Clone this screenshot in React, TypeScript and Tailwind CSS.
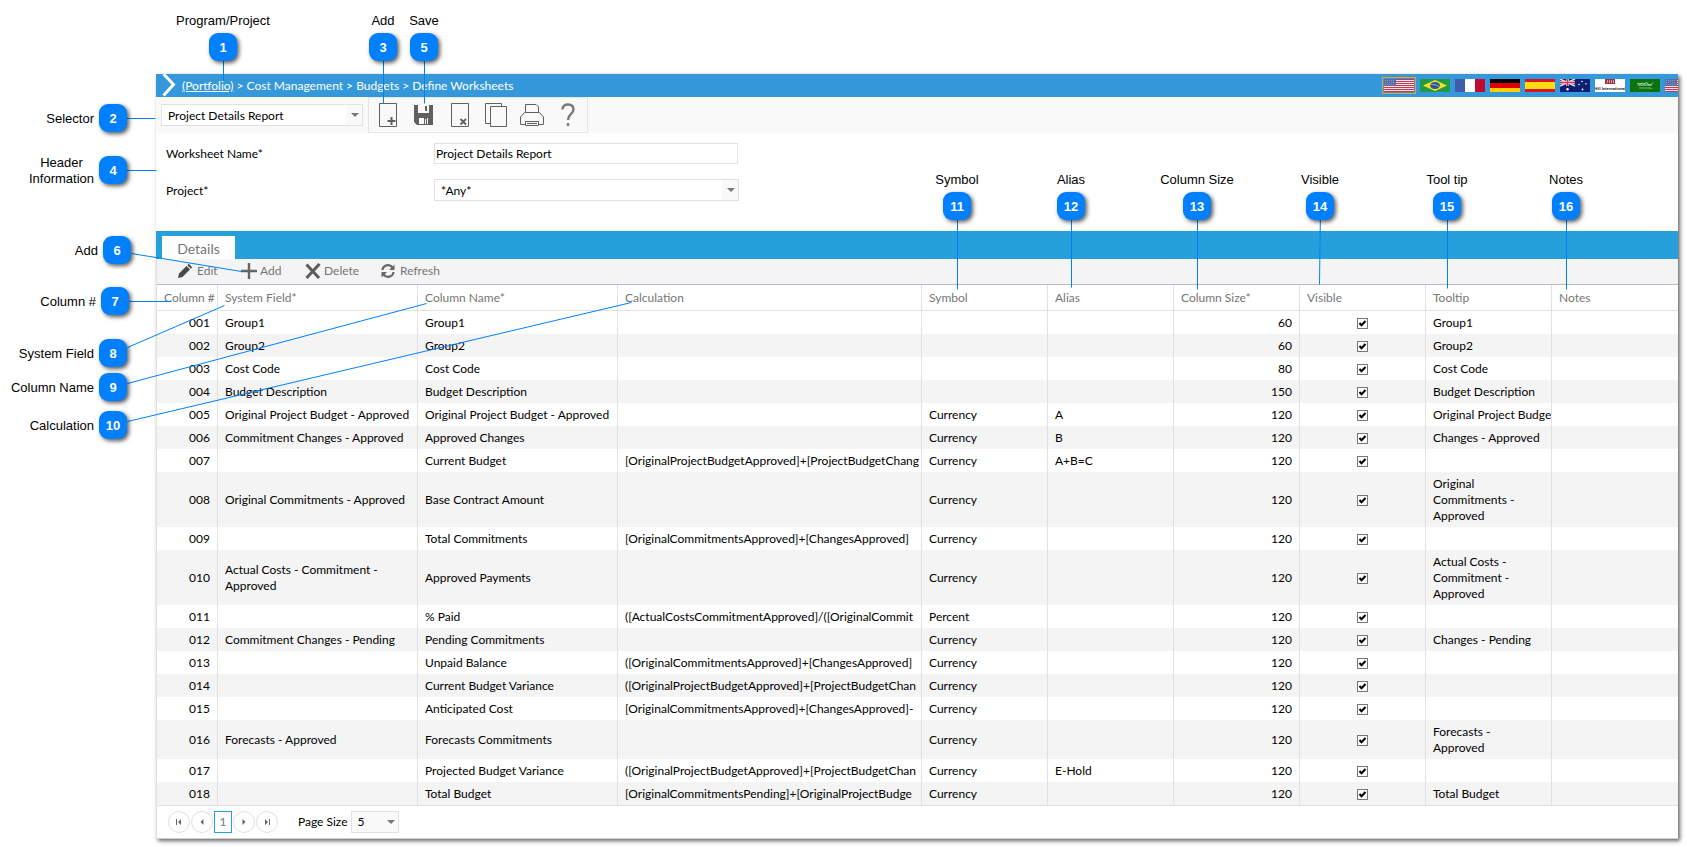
import React from 'react';
import { clsx } from 'clsx';

interface Row {
  id: string;
  field?: string;
  name: string;
  calc?: string;
  symbol?: string;
  alias?: string;
  size: number;
  tooltip?: string;
}

const rows: Row[] = [
  { id: '001', field: 'Group1', name: 'Group1', size: 60, tooltip: 'Group1' },
  { id: '002', field: 'Group2', name: 'Group2', size: 60, tooltip: 'Group2' },
  { id: '003', field: 'Cost Code', name: 'Cost Code', size: 80, tooltip: 'Cost Code' },
  { id: '004', field: 'Budget Description', name: 'Budget Description', size: 150, tooltip: 'Budget Description' },
  { id: '005', field: 'Original Project Budget - Approved', name: 'Original Project Budget - Approved', symbol: 'Currency', alias: 'A', size: 120, tooltip: 'Original Project Budge' },
  { id: '006', field: 'Commitment Changes - Approved', name: 'Approved Changes', symbol: 'Currency', alias: 'B', size: 120, tooltip: 'Changes - Approved' },
  { id: '007', name: 'Current Budget', calc: '[OriginalProjectBudgetApproved]+[ProjectBudgetChang', symbol: 'Currency', alias: 'A+B=C', size: 120 },
  { id: '008', field: 'Original Commitments - Approved', name: 'Base Contract Amount', symbol: 'Currency', size: 120, tooltip: 'Original\nCommitments -\nApproved' },
  { id: '009', name: 'Total Commitments', calc: '[OriginalCommitmentsApproved]+[ChangesApproved]', symbol: 'Currency', size: 120 },
  { id: '010', field: 'Actual Costs - Commitment -\nApproved', name: 'Approved Payments', symbol: 'Currency', size: 120, tooltip: 'Actual Costs -\nCommitment -\nApproved' },
  { id: '011', name: '% Paid', calc: '([ActualCostsCommitmentApproved]/([OriginalCommit', symbol: 'Percent', size: 120 },
  { id: '012', field: 'Commitment Changes - Pending', name: 'Pending Commitments', symbol: 'Currency', size: 120, tooltip: 'Changes - Pending' },
  { id: '013', name: 'Unpaid Balance', calc: '([OriginalCommitmentsApproved]+[ChangesApproved]', symbol: 'Currency', size: 120 },
  { id: '014', name: 'Current Budget Variance', calc: '([OriginalProjectBudgetApproved]+[ProjectBudgetChan', symbol: 'Currency', size: 120 },
  { id: '015', name: 'Anticipated Cost', calc: '[OriginalCommitmentsApproved]+[ChangesApproved]-', symbol: 'Currency', size: 120 },
  { id: '016', field: 'Forecasts - Approved', name: 'Forecasts Commitments', symbol: 'Currency', size: 120, tooltip: 'Forecasts -\nApproved' },
  { id: '017', name: 'Projected Budget Variance', calc: '([OriginalProjectBudgetApproved]+[ProjectBudgetChan', symbol: 'Currency', alias: 'E-Hold', size: 120 },
  { id: '018', name: 'Total Budget', calc: '[OriginalCommitmentsPending]+[OriginalProjectBudge', symbol: 'Currency', size: 120, tooltip: 'Total Budget' },
];

interface Callout {
  n: number;
  label: string;
  x: number;
  y: number;
  side: 'top' | 'left';
  to: [number, number];
  from?: [number, number];
}

// x / y are the centre of the numbered marker
const callouts: Callout[] = [
  { n: 1, label: 'Program/Project', x: 223, y: 47, side: 'top', to: [223, 80] },
  { n: 2, label: 'Selector', x: 113, y: 118, side: 'left', to: [155, 118] },
  { n: 3, label: 'Add', x: 383, y: 47, side: 'top', to: [383, 103] },
  { n: 4, label: 'Header\nInformation', x: 113, y: 170, side: 'left', to: [156, 170] },
  { n: 5, label: 'Save', x: 424, y: 47, side: 'top', to: [424, 103] },
  { n: 6, label: 'Add', x: 117, y: 250, side: 'left', from: [131, 253], to: [241, 271] },
  { n: 7, label: 'Column #', x: 115, y: 301, side: 'left', to: [171, 301] },
  { n: 8, label: 'System Field', x: 113, y: 353, side: 'left', from: [127, 347], to: [224, 305] },
  { n: 9, label: 'Column Name', x: 113, y: 387, side: 'left', from: [127, 383], to: [426, 303] },
  { n: 10, label: 'Calculation', x: 113, y: 425, side: 'left', from: [127, 421], to: [631, 302] },
  { n: 11, label: 'Symbol', x: 957, y: 206, side: 'top', to: [957, 289] },
  { n: 12, label: 'Alias', x: 1071, y: 206, side: 'top', to: [1071, 287] },
  { n: 13, label: 'Column Size', x: 1197, y: 206, side: 'top', to: [1197, 289] },
  { n: 14, label: 'Visible', x: 1320, y: 206, side: 'top', to: [1319, 284] },
  { n: 15, label: 'Tool tip', x: 1447, y: 206, side: 'top', to: [1447, 288] },
  { n: 16, label: 'Notes', x: 1566, y: 206, side: 'top', to: [1566, 289] },
];

const CalloutPin: React.FC<{ item: Callout }> = ({ item }) => (
  <div className="absolute size-7" style={{ left: item.x - 14, top: item.y - 14 }}>
    <span
      className={clsx(
        'absolute whitespace-pre text-center text-[13px] leading-4 text-black',
        item.side === 'top' ? 'bottom-full left-1/2 mb-1 -translate-x-1/2' : 'right-full top-1/2 mr-[5px] -translate-y-1/2 pt-0.5'
      )}
    >
      {item.label}
    </span>
    <span className="flex size-7 items-center justify-center rounded-[9px] bg-[#0080ff] pt-0.5 text-[13px] font-bold leading-4 text-white shadow-[2px_2px_4px_rgba(0,0,0,0.65)]">
      {item.n}
    </span>
  </div>
);

const Callouts = () => (
  <div className="pointer-events-none absolute inset-0 overflow-hidden font-['Liberation_Sans',Arial,sans-serif]">
    <svg className="absolute inset-0 h-full w-full" stroke="#0080ff" strokeWidth="1" fill="none">
      {callouts.map((c) => {
        const [x1, y1] = c.from ?? [c.x, c.y];
        return <line key={c.n} x1={x1 + 0.5} y1={y1 + 0.5} x2={c.to[0] + 0.5} y2={c.to[1] + 0.5} />;
      })}
    </svg>
    {callouts.map((c) => (
      <CalloutPin key={c.n} item={c} />
    ))}
  </div>
);

/* ---- flags ---- */

const UsFlag = () => (
  <svg viewBox="0 0 30 13" className="h-[13px] w-[30px]">
    <rect width="30" height="13" fill="#f3e3e6" />
    {[0, 2, 4, 6, 8, 10, 12].map((y) => (
      <rect key={y} y={y} width="30" height="1" fill="#c23a52" />
    ))}
    <rect width="12" height="7" fill="#5a6ba5" />
    {[1, 3, 5].map((y) => (
      <path key={y} d={`M1 ${y + 0.5}H11`} stroke="#a9b3d3" strokeWidth="0.6" strokeDasharray="1 1" />
    ))}
  </svg>
);

const BrazilFlag = () => (
  <svg viewBox="0 0 30 13" className="h-[13px] w-[30px]">
    <rect width="30" height="13" fill="#229a43" />
    <path d="M15 1 27 6.5 15 12 3 6.5Z" fill="#f5e02a" />
    <ellipse cx="15" cy="6.5" rx="5" ry="3.4" fill="#2d5791" />
    <path d="M10.5 5.6C13 5 17 6 19.5 7.8" stroke="#c9d6e6" strokeWidth="0.7" fill="none" />
  </svg>
);

const FranceFlag = () => (
  <svg viewBox="0 0 30 13" className="h-[13px] w-[30px]">
    <rect width="10" height="13" fill="#3f5ba9" />
    <rect x="10" width="10" height="13" fill="#fff" />
    <rect x="20" width="10" height="13" fill="#c10a30" />
  </svg>
);

const GermanyFlag = () => (
  <svg viewBox="0 0 30 13" className="h-[13px] w-[30px]">
    <rect width="30" height="5" fill="#000" />
    <rect y="4" width="30" height="5" fill="#e00000" />
    <rect y="9" width="30" height="4" fill="#ffce00" />
  </svg>
);

const SpainFlag = () => (
  <svg viewBox="0 0 30 13" className="h-[13px] w-[30px]">
    <rect width="30" height="13" fill="#d9141e" />
    <rect y="3" width="30" height="7" fill="#fbdc10" />
  </svg>
);

const AustraliaFlag = () => (
  <svg viewBox="0 0 30 13" className="h-[13px] w-[30px]">
    <rect width="30" height="13" fill="#0d1f73" />
    <path d="M0 0 15 7M15 0 0 7" stroke="#e9d5e0" strokeWidth="1.6" />
    <path d="M7.5 0V7M0 3.5H15" stroke="#fff" strokeWidth="2.4" />
    <path d="M7.5 0V7M0 3.5H15" stroke="#e0304a" strokeWidth="1.4" />
    <g fill="#fff">
      <circle cx="7.5" cy="10.2" r="1.2" />
      <circle cx="22" cy="2.5" r="0.8" />
      <circle cx="19" cy="5.5" r="0.8" />
      <circle cx="26" cy="4.8" r="0.8" />
      <circle cx="22.5" cy="10.5" r="0.9" />
    </g>
  </svg>
);

const HillFlag = () => (
  <svg viewBox="0 0 30 13" className="h-[13px] w-[30px]">
    <rect width="30" height="13" fill="#fff" />
    <rect x="10" y="0" width="10" height="5" fill="#9c3540" />
    <path d="M12.5 1V4M14.5 1V4M16.5 1V4M18.5 1V4" stroke="#f3dada" strokeWidth="0.6" />
    <text x="15" y="11" fontSize="4" textAnchor="middle" fill="#111" fontWeight="bold" fontFamily="Liberation Sans">
      Hill International
    </text>
  </svg>
);

const SaudiFlag = () => (
  <svg viewBox="0 0 30 13" className="h-[13px] w-[30px]">
    <rect width="30" height="13" fill="#0b730d" />
    <path d="M7 5C9 3 9 6 11 4.5S13 6 15 4.5 17 3 18 5 21 6 23 3.5M8 6H22" stroke="#b9dcb9" strokeWidth="1" fill="none" />
    <path d="M9 9H20L22 9.6" stroke="#a5d0a5" strokeWidth="0.7" fill="none" />
  </svg>
);

const flags = [
  { title: 'Brazil', Flag: BrazilFlag },
  { title: 'France', Flag: FranceFlag },
  { title: 'Germany', Flag: GermanyFlag },
  { title: 'Spain', Flag: SpainFlag },
  { title: 'Australia', Flag: AustraliaFlag },
  { title: 'Hill International', Flag: HillFlag },
  { title: 'Saudi Arabia', Flag: SaudiFlag },
  { title: 'United States', Flag: UsFlag },
];

/* ---- toolbar icons ---- */

const tools = [
  {
    title: 'Add',
    icon: <path d="M3.5 .5H20.5V23.5H3.5Z" />,
    heavy: <path d="M15.5 14V22M11.5 18H19.5" strokeWidth="2" />,
  },
  {
    title: 'Save',
    icon: (
      <>
        <path d="M2 2H21V22H5L2 19Z" fill="#606060" stroke="none" />
        <path d="M6 2H17V10H6Z" fill="#f9f9f9" stroke="none" />
        <path d="M13 3H15V8H13Z" fill="#606060" stroke="none" />
        <path d="M7 15H16V21H7Z" fill="#f9f9f9" stroke="none" />
        <path d="M12 15H15V21H12Z" fill="#606060" stroke="none" />
        <path d="M13 16H14V21H13Z" fill="#f9f9f9" stroke="none" />
      </>
    ),
  },
  {
    title: 'Delete',
    icon: <path d="M3.5 .5H20.5V23.5H3.5Z" />,
    heavy: <path d="M12.5 16 18 21.5M18 16 12.5 21.5" strokeWidth="1.8" />,
  },
  {
    title: 'Copy',
    icon: <path d="M6 20.5H1.5V.5H17.5V3M6.5 3.5H22.5V23.5H6.5Z" />,
  },
  {
    title: 'Print',
    icon: <path d="M5.5 9.5V1.5H16L18.5 4V9.5M4.5 9.5H19.5L23.5 14V21.5H18.5M5.5 21.5H.5V14L4.5 9.5M5.5 18.5H18.5V22.5H5.5ZM7 20.5H17" />,
  },
  {
    title: 'Help',
    icon: <path d="M6.5 6.5C6.5 3 9 1.5 12 1.5 15.5 1.5 17.5 3.5 17.5 6.5 17.5 11 12 11 12 17M12 20V23" strokeWidth="2.4" stroke="#7a7a7a" />,
  },
];

const Caret = () => (
  <svg viewBox="0 0 8 4" className="pointer-events-none absolute right-1 top-1/2 h-1 w-2 -translate-y-1/2">
    <path d="M0 0H8L4 4Z" fill="#777" />
  </svg>
);

const EditIcon = () => (
  <svg viewBox="0 0 16 16" className="size-4">
    <path d="M0 15 1 10.5 8.5 3 12 6.5 4.5 14Z" fill="#4a4a4a" />
    <path d="M9.300 2.200 10.800 .8 14.200 4.200 12.800 5.700Z" fill="#4a4a4a" />
  </svg>
);

const AddIcon = () => (
  <svg viewBox="0 0 16 16" className="size-4">
    <path d="M8 0V16M0 8H16" stroke="#666" strokeWidth="2.4" />
  </svg>
);

const DeleteIcon = () => (
  <svg viewBox="0 0 16 16" className="size-4">
    <path d="M1.5 1.5 14 15M14.5 1 1.5 15" stroke="#5c5c5c" strokeWidth="3" />
  </svg>
);

const RefreshIcon = () => (
  <svg viewBox="0 0 16 16" className="size-4">
    <path d="M1.500 7C2 2 8.500 .5 11.500 4.500M12.500 9C12 14 5.500 15.500 2.500 11.500" fill="none" stroke="#666" strokeWidth="2.2" />
    <path d="M13.500 1.500V7H8ZM.5 14.500V9H6Z" fill="#666" />
  </svg>
);

const gridActions = [
  { label: 'Edit', icon: <EditIcon />, cls: 'w-[63px]' },
  { label: 'Add', icon: <AddIcon />, cls: 'w-16' },
  { label: 'Delete', icon: <DeleteIcon />, cls: 'w-[76px]' },
  { label: 'Refresh', icon: <RefreshIcon />, cls: 'w-16' },
];

const columns = [
  { title: 'Column #', cls: 'w-[61px]' },
  { title: 'System Field*', cls: 'w-[200px]' },
  { title: 'Column Name*', cls: 'w-[200px]' },
  { title: 'Calculation', cls: 'w-[304px]' },
  { title: 'Symbol', cls: 'w-[126px]' },
  { title: 'Alias', cls: 'w-[126px]' },
  { title: 'Column Size*', cls: 'w-[126px]' },
  { title: 'Visible', cls: 'w-[126px]' },
  { title: 'Tooltip', cls: 'w-[126px]' },
  { title: 'Notes', cls: '' },
];

const Cell: React.FC<{ children?: React.ReactNode; right?: boolean }> = ({ children, right }) => (
  <td
    className={clsx(
      'overflow-hidden whitespace-pre border-r border-[#e1e1e1] pb-[3px] pl-[7px] pt-1 last:border-r-0',
      right && 'pr-[7px] text-right'
    )}
  >
    {children}
  </td>
);

const VisibleBox: React.FC<{ id: string }> = ({ id }) => (
  <td className="border-r border-[#e1e1e1] p-0">
    <label className="relative mx-auto mt-px block size-[11px]">
      <input
        type="checkbox"
        defaultChecked
        aria-label={`Visible ${id}`}
        className="peer block size-[11px] appearance-none border border-[#777] bg-white"
      />
      <svg viewBox="0 0 11 11" className="pointer-events-none absolute inset-0 hidden size-[11px] peer-checked:block">
        <path d="M2.5 5 4.5 7.3 8.5 3" stroke="#000" strokeWidth="2" fill="none" />
      </svg>
    </label>
  </td>
);

const DetailsGrid = () => (
  <table className="w-full table-fixed border-separate border-spacing-0 border-t border-[#b9bcc6]">
    <thead>
      <tr>
        {columns.map((c) => (
          <th
            key={c.title}
            className={clsx(
              'h-[26px] overflow-hidden whitespace-nowrap border-b border-r border-[#e1e1e1] p-0 pl-[7px] text-left font-normal text-[#767676] last:border-r-0',
              c.cls
            )}
          >
            {c.title}
          </th>
        ))}
      </tr>
    </thead>
    <tbody>
      {rows.map((r) => (
        <tr key={r.id} className="even:bg-[#f4f4f4]">
          <Cell right>{r.id}</Cell>
          <Cell>{r.field}</Cell>
          <Cell>{r.name}</Cell>
          <Cell>{r.calc}</Cell>
          <Cell>{r.symbol}</Cell>
          <Cell>{r.alias}</Cell>
          <Cell right>{r.size}</Cell>
          <VisibleBox id={r.id} />
          <Cell>{r.tooltip}</Cell>
          <Cell />
        </tr>
      ))}
    </tbody>
  </table>
);

const PagerButton: React.FC<{ title: string; d: string }> = ({ title, d }) => (
  <button title={title} className="flex size-[22px] items-center justify-center rounded-full border border-[#e1e1e1]">
    <svg viewBox="0 0 8 8" className="size-2">
      <path d={d} fill="#666" />
    </svg>
  </button>
);

const Pager = () => (
  <div className="flex items-center gap-px border-t border-[#e1e1e1] py-[5px] pl-[11px]">
    <PagerButton title="First page" d="M1 1H2V7H1ZM3 4 6 1V7Z" />
    <PagerButton title="Previous page" d="M2.5 4 5.5 1V7Z" />
    <button className="h-[22px] w-[18px] border border-[#25a0da] text-[#767676]">1</button>
    <PagerButton title="Next page" d="M5.5 4 2.5 1V7Z" />
    <PagerButton title="Last page" d="M6 1H7V7H6ZM5 4 2 1V7Z" />
    <label htmlFor="page-size" className="ml-[19px] mr-0.5">
      Page Size
    </label>
    <div className="relative h-[22px] w-12">
      <select id="page-size" className="h-full w-full appearance-none border border-[#e1e1e1] bg-[#f9f9f9] pl-1.5">
        <option>5</option>
      </select>
      <Caret />
    </div>
  </div>
);

export default function App() {
  return (
    <div className="relative bg-white pb-2 pl-[156px] pr-[9px] pt-[74px] font-['Lato','Segoe_UI',sans-serif] text-[12px] leading-4 text-black">
      <main className="border-b border-[#d0d0d0] bg-white shadow-[2px_2px_4px_rgba(0,0,0,0.6)]">
        {/* Breadcrumb */}
        <header className="flex h-[23px] items-center bg-[#3598db] pl-1.5 text-white">
          <svg viewBox="0 0 14 23" className="h-[23px] w-[14px]">
            <path d="M1.5 0 11.5 10.5 1.5 21.5" stroke="#fff" strokeWidth="3" fill="none" />
          </svg>
          <nav className="ml-1.5 flex-1">
            <a href="#portfolio" className="underline">(Portfolio)</a>
            {' > Cost Management > Budgets > Define Worksheets'}
          </nav>
          <div className="flex w-[296px] items-center gap-[5px] overflow-hidden">
            <button title="United States" className="-mr-px flex shrink-0 border border-[#f59a23] p-px">
              <UsFlag />
            </button>
            {flags.map(({ title, Flag }) => (
              <button key={title} title={title} className="block shrink-0">
                <Flag />
              </button>
            ))}
          </div>
        </header>

        {/* Main toolbar */}
        <div className="flex h-9 items-center bg-[#f9f9f9] pl-[5px]">
          <div className="relative h-[22px] w-[202px]">
            <select
              aria-label="Worksheet"
              className="h-full w-full appearance-none border border-[#e1e1e1] bg-white pl-1.5 pt-px"
            >
              <option>Project Details Report</option>
            </select>
            <span className="pointer-events-none absolute inset-y-px right-px w-4 bg-[#f9f9f9]" />
            <Caret />
          </div>
          <div className="ml-[5px] flex h-9 w-[220px] items-center border border-[#e5e5e5] pl-px">
            {tools.map((t) => (
              <button key={t.title} title={t.title} className="flex w-9 justify-center">
                <svg viewBox="0 0 24 24" className="size-6" fill="none" stroke="#606060" strokeWidth="1">
                  {t.icon}
                  {t.heavy}
                </svg>
              </button>
            ))}
          </div>
        </div>

        {/* Header information */}
        <div className="grid grid-cols-[268px_1fr] items-center gap-y-[15px] pb-[30px] pl-2.5 pt-[10px]">
          <label htmlFor="worksheet-name">Worksheet Name*</label>
          <input
            id="worksheet-name"
            defaultValue="Project Details Report"
            className="h-[21px] w-[304px] border border-[#e1e1e1] pl-px"
          />
          <label htmlFor="project" className="pt-px">Project*</label>
          <div className="relative h-[22px] w-[305px]">
            <select id="project" className="h-full w-full appearance-none border border-[#e1e1e1] bg-white pl-1.5 pt-px">
              <option>*Any*</option>
            </select>
            <span className="pointer-events-none absolute inset-y-px right-px w-4 bg-[#f9f9f9]" />
            <Caret />
          </div>
        </div>

        {/* Details */}
        <div className="flex h-7 items-end bg-[#25a0da] pl-1.5">
          <button className="h-[23px] w-[73px] bg-white pt-0.5 text-[14px] text-[#767676]">Details</button>
        </div>
        <div className="border-l border-[#e1e1e1]">
          <div className="flex h-[25px] items-center bg-[#f4f4f4] pb-0.5 pl-[21px] text-[#767676]">
            {gridActions.map((a) => (
              <button key={a.label} className={clsx('flex items-center gap-[3px]', a.cls)}>
                {a.icon}
                {a.label}
              </button>
            ))}
          </div>
          <DetailsGrid />
          <Pager />
        </div>
      </main>

      <Callouts />
    </div>
  );
}
